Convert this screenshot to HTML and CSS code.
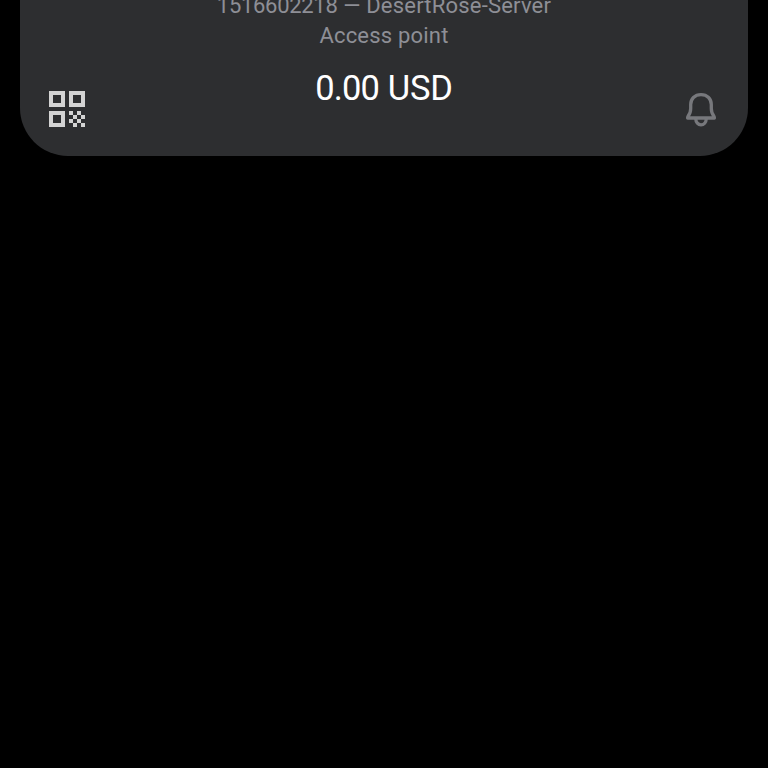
FILE: index.html
```html
<!DOCTYPE html>
<html lang="en">
<head>
    <meta charset="UTF-8">
    <meta name="viewport" content="width=device-width, initial-scale=1.0">
    <title>Account</title>
    <link rel="stylesheet" href="styles.css">
</head>
<body>
    <div class="card">
        <svg class="qr" width="36" height="36" viewBox="0 0 36 36">
            <path fill-rule="evenodd" d="M0 0h16v16H0zM4 4v8h8V4zM20 0h16v16H20zM24 4v8h8V4zM0 20h16v16H0zM4 24v8h8v-8z"/>
            <path d="M20 20h4v4h-4zM28 20h4v4h-4zM24 24h4v4h-4zM32 24h4v4h-4zM20 28h4v4h-4zM28 28h4v4h-4zM24 32h4v4h-4zM32 32h4v4h-4z"/>
        </svg>
        <div class="account">
            <p class="info"><span class="number">1516602218</span> — DesertRose-Server</p>
            <p class="info">Access point</p>
            <p class="balance"><span class="amount">0.00</span> USD</p>
        </div>
        <svg class="bell" width="32" height="36" viewBox="0 0 32 36">
            <path d="M16 3.6C9.6 3.6 5.7 8 5.7 13.5V17.5C5.7 21 4.8 23.2 3 25.4Q2.600 26 2.600 27H29.400Q29.400 26 29 25.400C27.200 23.200 26.300 21 26.300 17.500V13.500C26.300 8 22.400 3.600 16 3.600z"/>
            <path d="M10.800 28a5.200 5.800 0 0 0 10.400 0"/>
        </svg>
    </div>
</body>
</html>
```

FILE: styles.css
```css
body {
    margin: 0;
    background-color: #000;
    font-family: Roboto, sans-serif;
    overflow: hidden;
}
.card {
    display: flex;
    justify-content: space-between;
    align-items: flex-end;
    box-sizing: border-box;
    height: 156px;
    margin: 0 20px;
    padding: 0 31px 29px 29px;
    border-radius: 0 0 48px 48px;
    background-color: #2d2e30;
}
.account {
    text-align: center;
    margin-bottom: 19px;
    padding-right: 2px;
}
.account p {
    margin: 0;
}
.info {
    font-size: 22px;
    line-height: 30px;
    letter-spacing: 0.2px;
    color: #8e8f96;
}
.number {
    letter-spacing: -0.3px;
}
.account .balance {
    margin-top: 17px;
    font-size: 34.5px;
    line-height: 40px;
    letter-spacing: -0.1px;
    color: #fff;
}
.balance .amount {
    letter-spacing: -0.8px;
}
.qr {
    fill: #d3d3d3;
}
.bell {
    fill: none;
    stroke: #77787c;
    stroke-width: 3.3;
    stroke-linejoin: round;
}
```
